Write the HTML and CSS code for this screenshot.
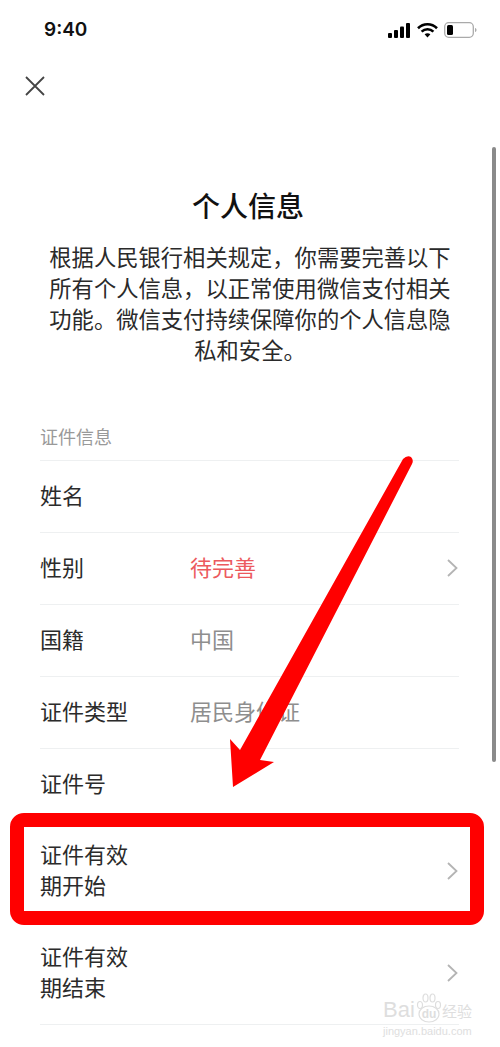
FILE: index.html
```html
<!DOCTYPE html>
<html lang="zh-CN">
<head>
  <meta charset="UTF-8" />
  <title>个人信息</title>
  <meta name="viewport" content="width=device-width, initial-scale=1.0" />
  <link rel="stylesheet" href="styles.css">
</head>
<body>
<div class="screen">
  <div class="status-bar">
    <span class="time">9:40</span>
    <div class="status-icons">
      <svg width="23" height="15" viewBox="0 0 23 15"><rect x="0" y="10" width="4" height="5" rx="1"/><rect x="6" y="7" width="4" height="8" rx="1"/><rect x="12" y="3.5" width="4" height="11.5" rx="1"/><rect x="18" y="0" width="4" height="15" rx="1"/></svg>
      <svg width="21" height="15" viewBox="0 0 21 15"><path d="M1 5.2C6.4 0 14.6 0 20 5.2" class="wifi"/><path d="M4.6 8.6C8 5.4 13 5.4 16.4 8.6" class="wifi"/><path d="M7.6 11.2L10.5 14.6 13.4 11.2C11.600 9.800 9.400 9.800 7.6 11.2Z"/></svg>
      <svg width="33" height="16" viewBox="0 0 33 16"><rect x="0.7" y="0.7" width="28.6" height="14.6" rx="4" class="batt"/><rect x="3" y="3" width="6" height="10" rx="1.5"/><path d="M31 6v4c1-.3 1.500-1 1.500-2s-.5-1.700-1.500-2Z" fill="#aaa"/></svg>
    </div>
  </div>

  <div class="nav">
    <svg class="close" width="20" height="20" viewBox="0 0 20 20"><path d="M1 1L19 19M19 1L1 19"/></svg>
  </div>

  <h1>个人信息</h1>
  <p class="intro">根据人民银行相关规定，你需要完善以下所有个人信息，以正常使用微信支付相关功能。微信支付持续保障你的个人信息隐私和安全。</p>

  <div class="section-label">证件信息</div>
  <div class="list">
    <div class="row"><div class="key">姓名</div></div>
    <div class="row"><div class="key">性别</div><div class="val red">待完善</div><svg class="chev" width="11" height="18" viewBox="0 0 11 18"><path d="M1 1L9.500 9 1 17"/></svg></div>
    <div class="row"><div class="key">国籍</div><div class="val">中国</div></div>
    <div class="row"><div class="key">证件类型</div><div class="val">居民身份证</div></div>
    <div class="row"><div class="key">证件号</div></div>
    <div class="row tall"><div class="key">证件有效<br>期开始</div><svg class="chev" width="11" height="18" viewBox="0 0 11 18"><path d="M1 1L9.500 9 1 17"/></svg></div>
    <div class="row tall"><div class="key">证件有效<br>期结束</div><svg class="chev" width="11" height="18" viewBox="0 0 11 18"><path d="M1 1L9.500 9 1 17"/></svg></div>
  </div>

  <div class="scrollbar"></div>

  <!-- Annotation drawn on top of the screenshot -->
  <svg class="arrow" width="500" height="1047" viewBox="0 0 500 1047"><path d="M403 459Q407 455 411 457Q414 460 412 464L260 760 274 762 233 787 230 739 240 750Z"/></svg>
  <div class="highlight"></div>

  <div class="watermark">
    <div class="wm-top">
      <span class="wm-bai">Bai</span>
      <div class="wm-paw">
        <svg width="26" height="32" viewBox="0 0 26 32"><g class="paw"><ellipse cx="4" cy="13" rx="2.500" ry="3.500"/><ellipse cx="9.500" cy="6" rx="2.500" ry="4"/><ellipse cx="16.500" cy="6" rx="2.500" ry="4"/><ellipse cx="22" cy="13" rx="2.500" ry="3.500"/><ellipse cx="13" cy="22" rx="10" ry="8"/></g></svg>
        <span class="wm-du">du</span>
      </div>
      <span class="wm-jy">经验</span>
    </div>
    <div class="wm-url">jingyan.baidu.com</div>
  </div>
</div>
</body>
</html>
```

FILE: styles.css
```css
* {
  box-sizing: border-box;
}

body {
  margin: 0;
  background: #fff;
  color: #1b1b1b;
  font-family: "Noto Sans CJK SC", "Noto Sans", sans-serif;
}

.screen {
  position: relative;
  width: 500px;
  height: 1047px;
  overflow: hidden;
}

/* Status bar */
.status-bar {
  height: 60px;
  padding: 20px 23px 0 44px;
  display: flex;
  justify-content: space-between;
  align-items: flex-start;
}

.time {
  font-family: Inter, "Liberation Sans", sans-serif;
  font-weight: 600;
  font-size: 19px;
  line-height: 20px;
  color: #111;
}

.status-icons {
  display: flex;
  align-items: center;
  gap: 6px;
  height: 20px;
}

.wifi {
  fill: none;
  stroke: #000;
  stroke-width: 2.600;
}

.batt {
  fill: none;
  stroke: #aaa;
  stroke-width: 1.300;
}

/* Close button */
.nav {
  height: 52px;
  padding: 16px 0 0 25px;
}

.close path {
  fill: none;
  stroke: #444;
  stroke-width: 1.800;
}

h1 {
  margin: 71px 0 0;
  padding-right: 4px;
  height: 44px;
  text-align: center;
  font-size: 28px;
  line-height: 44px;
  font-weight: 500;
  color: #111;
}

.intro {
  margin: 14px 0 0;
  padding: 0 48px;
  text-align: center;
  font-size: 22.300px;
  line-height: 31px;
  color: #2a2a2a;
}

.section-label {
  margin-top: 58px;
  padding-left: 40px;
  height: 37px;
  font-size: 18px;
  line-height: 26px;
  color: #999;
}

/* Rows */
.list {
  margin: 0 41px 0 40px;
  border-bottom: 1px solid #eef0f1;
}

.row {
  display: flex;
  align-items: center;
  height: 72px;
  padding-bottom: 6px;
  border-top: 1px solid #eef0f1;
  font-size: 22px;
}

.row.tall {
  height: 102px;
  line-height: 31px;
}

.key {
  width: 150px;
  color: #2b2b2b;
}

.val {
  flex: 1;
  color: #8e8e8e;
}

.val.red {
  color: #ec5a5e;
}

.chev {
  margin: 4px 1px 0 auto;
}

.chev path {
  fill: none;
  stroke: #b4b4b4;
  stroke-width: 1.800;
}

.scrollbar {
  position: absolute;
  top: 147px;
  left: 492px;
  width: 4px;
  height: 615px;
  border-radius: 2px;
  background: #8a8a8a;
}

/* Red annotation */
.arrow {
  position: absolute;
  top: 0;
  left: 0;
}

.arrow path {
  fill: #ff0000;
}

.highlight {
  position: absolute;
  top: 813px;
  left: 10px;
  width: 474px;
  height: 112px;
  border: 14px solid #ff0000;
  border-radius: 14px;
}

/* Baidu watermark */
.watermark {
  position: absolute;
  top: 992px;
  left: 383px;
  width: 92px;
  color: #dedede;
}

.wm-top {
  display: flex;
  align-items: flex-end;
  height: 32px;
}

.wm-bai {
  width: 33px;
  font-family: "Liberation Sans", sans-serif;
  font-size: 22px;
  line-height: 28px;
}

.wm-paw {
  position: relative;
  width: 26px;
  height: 32px;
}

.wm-du {
  position: absolute;
  left: 0;
  right: 0;
  top: 15px;
  text-align: center;
  font-family: "Liberation Sans", sans-serif;
  font-size: 12px;
  line-height: 14px;
  font-weight: 700;
}

.wm-jy {
  font-size: 15px;
  line-height: 26px;
  white-space: nowrap;
}

.paw {
  fill: #fff;
  stroke: #dedede;
  stroke-width: 1.200;
}

.wm-url {
  font-family: "Liberation Sans", sans-serif;
  font-size: 11px;
  line-height: 14px;
  white-space: nowrap;
}
```
